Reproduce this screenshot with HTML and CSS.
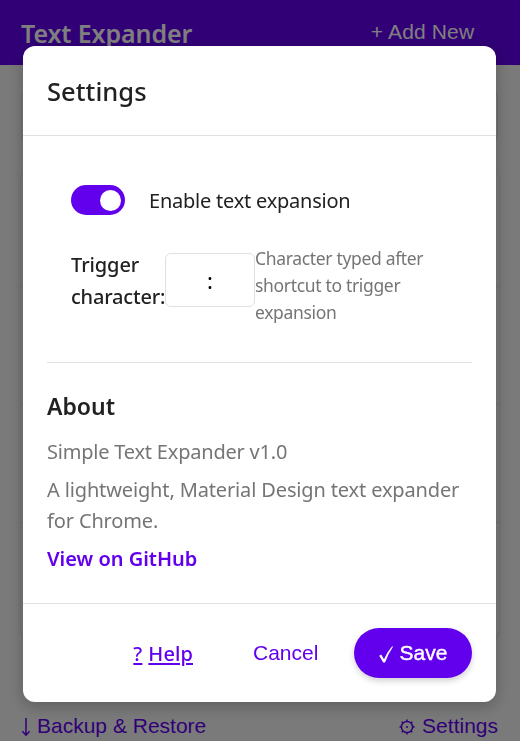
FILE: index.html
```html
<!DOCTYPE html>
<html lang="en">
<head>
<meta charset="utf-8">
<title>Text Expander</title>
<link rel="stylesheet" href="styles.css">
</head>
<body>
<div class="page">
  <header class="topbar">
    <h1 class="brand">Text Expander</h1>
    <button class="add">+ Add New</button>
  </header>
  <main class="content">
    <div class="search"></div>
    <div class="list"><div class="item"></div><div class="item"></div><div class="item"></div><div class="item"></div></div>
  </main>
  <footer class="bottombar">
    <span class="tool"><svg class="arrow" width="10" height="20" viewBox="0 0 10 20"><path d="M5 1V18M1.4 14.2 5 18.2 8.6 14.2"/></svg>Backup &amp; Restore</span>
    <span class="tool"><svg class="gear" width="16" height="16" viewBox="0 0 16 16"><circle cx="8" cy="8" r="5.6"/><path d="M8 2.4V.5M8 13.6v1.9M2.4 8H.5M13.6 8h1.9M4 4 2.7 2.7M12 4l1.3-1.3M4 12l-1.3 1.3M12 12l1.3 1.3"/><circle class="dot" cx="8" cy="8" r="1"/></svg>Settings</span>
  </footer>
</div>
<div class="overlay">
  <section class="modal">
    <header class="modal-head"><h2>Settings</h2></header>
    <div class="modal-body">
      <div class="options">
        <div class="toggle-row"><span class="switch"><span class="knob"></span></span><span class="toggle-label">Enable text expansion</span></div>
        <div class="trigger-row">
          <label class="trigger-label">Trigger<br><span class="tight">character:</span></label>
          <span class="trigger-input">:</span>
          <span class="hint">Character typed after<br>shortcut to trigger<br>expansion</span>
        </div>
      </div>
      <div class="about">
        <h3>About</h3>
        <p class="version">Simple Text Expander v1.0</p>
        <p class="desc">A lightweight, Material Design text expander<br>for Chrome.</p>
        <p><a class="github">View on GitHub</a></p>
      </div>
    </div>
    <footer class="modal-foot">
      <a class="help"><span>?</span><span>Help</span></a>
      <button class="cancel">Cancel</button>
      <button class="save"><svg width="16" height="19" viewBox="0 0 16 19"><path d="M1.2 10.8 3.2 9.6 6 14.3Q9.5 6.2 14.2 1.2L15 1.8Q10.4 8.5 7 17.4H5.2Z"/></svg>Save</button>
    </footer>
  </section>
</div>
</body>
</html>
```
FILE: styles.css
```css
* { box-sizing: border-box; }
html, body { margin: 0; height: 100%; overflow: hidden; }
body { font-family: "Noto Sans", sans-serif; font-size: 20px; color: #212121; }
h1, h2, h3, p { margin: 0; font-weight: 500; }
button { font-family: "Liberation Sans", sans-serif; font-size: 21px; border: 0; background: none; padding: 0; }

.page { height: 741px; background: #f5f5f5; display: flex; flex-direction: column; }
.topbar { height: 65px; flex: none; background: #6200ee; color: #fff; display: flex; justify-content: space-between; align-items: flex-start; padding: 16px 22px 0 21px; }
.brand { font-size: 25px; line-height: 35px; font-weight: 600; letter-spacing: -0.1px; white-space: nowrap; }
.add { color: #fff; width: 151px; height: 32px; line-height: 32px; letter-spacing: .15px; white-space: nowrap; }
.content { flex: 1; padding: 26px 21px 0; }
.search { height: 51px; border: 1px solid #e0e0e0; border-radius: 6px; margin-right: 1px; }
.list { margin-top: 26px; border-radius: 12px; box-shadow: 0 1px 4px rgba(0, 0, 0, .12); overflow: hidden; }
.item { height: 118px; }
.item + .item { border-top: 1px solid #e0e0e0; }
.bottombar { height: 31px; flex: none; display: flex; justify-content: space-between; padding: 0 22px 0 21px; color: #6200ee; font: 21px/32px "Liberation Sans", sans-serif; }
.tool { display: flex; align-items: center; white-space: nowrap; }
.arrow { margin: 3px 6px 0 0; }
.gear { margin: 3px 7px 0 0; }
.arrow, .gear { fill: none; stroke: #6200ee; stroke-width: 1.5; }
.gear .dot { fill: #6200ee; stroke: none; }

.overlay { position: fixed; inset: 0; background: rgba(0, 0, 0, .5); padding: 46px 24px 0 23px; }
.modal { height: 656px; background: #fff; border-radius: 12px; box-shadow: 0 4px 16px rgba(0, 0, 0, .25); display: flex; flex-direction: column; }
.modal-head { height: 90px; border-bottom: 1px solid #e0e0e0; padding: 27px 24px 0; }
.modal-head h2 { font-size: 25.5px; line-height: 36px; letter-spacing: 0.05px; }
.modal-body { flex: 1; padding: 24px 24px 0; }
.options { height: 203px; padding: 24px 24px 0; border-bottom: 1px solid #e0e0e0; }
.toggle-row { display: flex; align-items: center; height: 32px; gap: 24px; white-space: nowrap; }
.toggle-label { letter-spacing: -0.23px; }
.switch { width: 54px; height: 30px; border-radius: 15px; background: #6200ee; display: flex; align-items: center; justify-content: flex-end; padding-right: 4px; }
.knob { width: 21px; height: 21px; border-radius: 50%; background: #fff; }
.trigger-row { display: flex; align-items: flex-start; margin-top: 29px; height: 81px; }
.trigger-label { width: 94px; margin-top: 4px; line-height: 32px; font-weight: 500; letter-spacing: -0.1px; white-space: nowrap; }
.tight { letter-spacing: -0.2px; }
.trigger-input { width: 90px; height: 54px; margin-top: 8px; border: 1px solid #e0e0e0; border-radius: 6px; text-align: center; color: #000; font-size: 22px; line-height: 52px; }
.hint { font-size: 17.5px; line-height: 27px; letter-spacing: -0.33px; color: #757575; white-space: nowrap; }
.about { padding-top: 25px; color: #757575; white-space: nowrap; line-height: 31px; }
.about h3 { color: #212121; font-size: 23px; line-height: 36px; font-weight: 600; }
.about p { font-weight: 400; }
.about .version { margin-top: 12px; letter-spacing: -0.21px; }
.about .desc { margin-top: 7px; letter-spacing: -0.14px; }
.about .github { color: #6200ee; font-weight: 600; display: inline-block; margin-top: 7px; }
.modal-foot { height: 99px; flex: none; border-top: 1px solid #e0e0e0; display: flex; justify-content: flex-end; align-items: center; padding: 0 24px; color: #6200ee; }
.help { display: flex; gap: 6px; text-decoration: none; font-weight: 500; margin-right: 60px; letter-spacing: .1px; }
.help span { text-decoration: underline; text-underline-offset: 2px; text-decoration-thickness: 2px; text-decoration-skip-ink: auto; }
.cancel { color: #6200ee; width: 65px; margin-right: 36px; }
.save { width: 118px; height: 50px; border-radius: 25px; background: #6200ee; color: #fff; display: flex; align-items: center; justify-content: center; gap: 6px; box-shadow: 0 3px 6px rgba(0, 0, 0, .18); -webkit-text-stroke: .4px #fff; }
.save svg { fill: #fff; margin: 3px 0 0 -1px; }
```
